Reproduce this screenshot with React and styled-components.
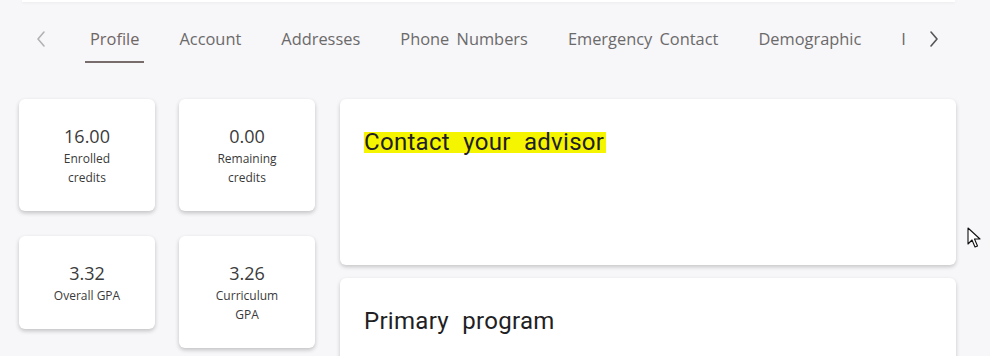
import React from "react";
import styled, { createGlobalStyle } from "styled-components";

const GlobalStyle = createGlobalStyle`
  body {
    margin: 0;
    background: #f7f6f8;
    font-family: "Open Sans", "Liberation Sans", sans-serif;
  }
`;

// the last tab is scrolled mostly out of view; only its first letter shows
const tabs = [
  "Profile",
  "Account",
  "Addresses",
  "Phone Numbers",
  "Emergency Contact",
  "Demographic",
  "I",
];

const stats = [
  { value: "16.00", label: "Enrolled credits" },
  { value: "0.00", label: "Remaining credits" },
  { value: "3.32", label: "Overall GPA" },
  { value: "3.26", label: "Curriculum GPA" },
];

export default function App() {
  return (
    <Page>
      <GlobalStyle />
      <TopEdge />
      <TabBar>
        <Arrow disabled>
          <Chevron dir="left" />
        </Arrow>
        <TabList>
          {tabs.map((t, i) => (
            <Tab key={t} active={i === 0}>
              {t}
            </Tab>
          ))}
        </TabList>
        <Arrow>
          <Chevron dir="right" />
        </Arrow>
      </TabBar>

      <Content>
        <StatGrid>
          {stats.map((s) => (
            <StatCard key={s.label}>
              <StatValue>{s.value}</StatValue>
              <StatLabel>{s.label}</StatLabel>
            </StatCard>
          ))}
        </StatGrid>
        <MainColumn>
          <Panel tall>
            <PanelTitle>
              <Highlight>Contact your advisor</Highlight>
            </PanelTitle>
          </Panel>
          <Panel>
            <PanelTitle>Primary program</PanelTitle>
          </Panel>
        </MainColumn>
      </Content>

      <Cursor />
    </Page>
  );
}

function Chevron({ dir }) {
  return (
    <svg width="12" height="18" viewBox="0 0 12 18" fill="none">
      <path
        d={dir === "left" ? "M9 2 L3 9 L9 16" : "M3 2 L9 9 L3 16"}
        stroke="currentColor"
        strokeWidth="1.6"
        strokeLinecap="round"
        strokeLinejoin="round"
      />
    </svg>
  );
}

function Cursor() {
  return (
    <CursorWrap>
      <svg width="14" height="22" viewBox="0 0 14 22">
        <path
          d="M1 1 L1 17 L5 13 L8 20 L10.5 19 L7.5 12 L13 12 Z"
          fill="#fff"
          stroke="#111"
          strokeWidth="1.1"
          strokeLinejoin="round"
        />
      </svg>
    </CursorWrap>
  );
}

const Page = styled.div`
  position: relative;
  width: 990px;
  height: 356px;
  overflow: hidden;
`;

const TopEdge = styled.div`
  height: 2px;
  margin: 0 35px 0 22px;
  background: #fff;
  box-shadow: 0 1px 3px rgba(0, 0, 0, 0.06);
`;

const TabBar = styled.div`
  display: flex;
  align-items: flex-start;
  padding-left: 26px;
  margin-top: 15px;
`;

const Arrow = styled.div`
  width: 30px;
  height: 44px;
  display: flex;
  align-items: center;
  justify-content: center;
  color: ${(p) => (p.disabled ? "#b4b1b4" : "#555")};
  flex-shrink: 0;
`;

const TabList = styled.div`
  display: flex;
  gap: 30px;
  padding-left: 29px;
  width: 832px;
  overflow: hidden;
  flex-shrink: 0;
  margin-right: 2px;
`;

const Tab = styled.div`
  padding: 11px 5px;
  font-size: 16.4px;
  line-height: 22px;
  word-spacing: 3px;
  color: ${(p) => (p.active ? "#6f6565" : "#6b6a6b")};
  white-space: nowrap;
  border-bottom: 2px solid ${(p) => (p.active ? "#786d6c" : "transparent")};
`;

const Content = styled.div`
  display: flex;
  align-items: flex-start;
  gap: 25px;
  padding: 36px 0 0 19px;
`;

const StatGrid = styled.div`
  display: grid;
  grid-template-columns: 136px 136px;
  column-gap: 24px;
  row-gap: 25px;
  align-items: start;
`;

const StatCard = styled.div`
  background: #fff;
  border-radius: 6px;
  box-shadow: 0 2px 4px rgba(0, 0, 0, 0.22);
  padding: 24px 10px;
  display: flex;
  flex-direction: column;
  align-items: center;
  text-align: center;
`;

const StatValue = styled.div`
  font-size: 18px;
  line-height: 26px;
  color: #3b3b3b;
`;

const StatLabel = styled.div`
  font-size: 12px;
  line-height: 19px;
  color: #3a3a3a;
  max-width: 80px;
`;

const MainColumn = styled.div`
  display: flex;
  flex-direction: column;
  gap: 13px;
  width: 616px;
`;

const Panel = styled.div`
  background: #fff;
  border-radius: 6px;
  box-shadow: 0 2px 4px rgba(0, 0, 0, 0.2);
  padding: 24px;
  min-height: ${(p) => (p.tall ? "118px" : "100px")};
`;

const PanelTitle = styled.div`
  font-family: Roboto, "Liberation Sans", sans-serif;
  font-size: 24px;
  line-height: 38px;
  letter-spacing: 0.3px;
  word-spacing: 7px;
  color: #1f1f24;
`;

const Highlight = styled.span`
  background: linear-gradient(
    transparent 16%,
    #f5f500 16%,
    #f5f500 88%,
    transparent 88%
  );
  padding-right: 2px;
`;

const CursorWrap = styled.div`
  position: absolute;
  left: 967px;
  top: 227px;
  line-height: 0;
`;
